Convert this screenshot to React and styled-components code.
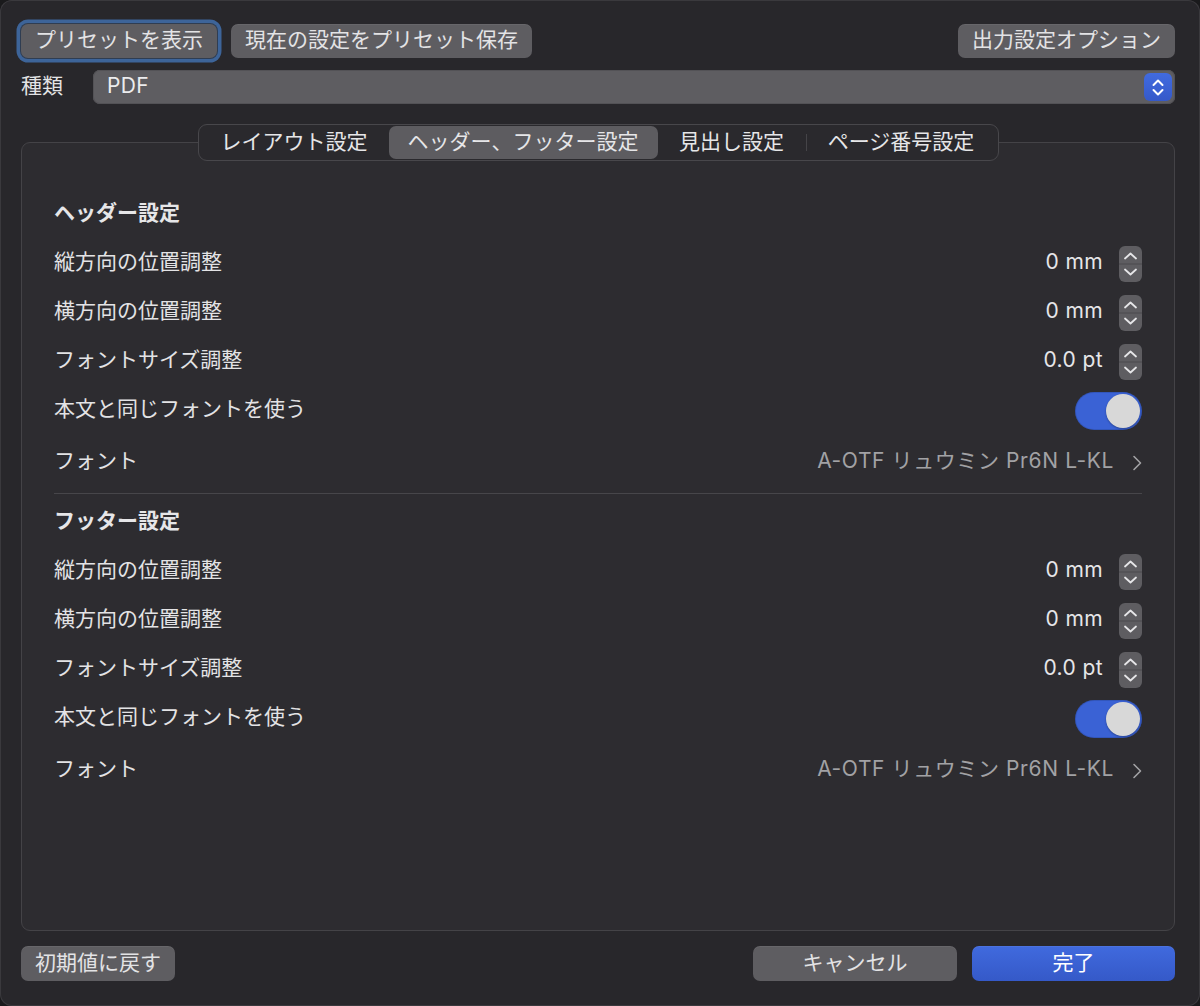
import styled, { createGlobalStyle } from 'styled-components';

const GlobalStyle = createGlobalStyle`
  * { box-sizing: border-box; }
  html, body { margin: 0; padding: 0; background: #1a1a1c; }
  body { font-family: Inter, "Noto Sans CJK JP", sans-serif; }
`;

const Window = styled.div`
  display: flex;
  flex-direction: column;
  width: 1200px;
  height: 1006px;
  padding: 24px 25px 25px 21px;
  background-color: #28272b;
  border-radius: 12px;
  box-shadow: inset 0 0 0 1px #3a393d;
  color: #e3e3e5;
  font-size: 21px;
`;

const TopBar = styled.div`
  display: flex;
  align-items: center;
  justify-content: space-between;
  height: 34px;
`;

const ButtonGroup = styled.div`
  display: flex;
  align-items: center;
  gap: ${(p) => p.$gap || 14}px;
`;

const Button = styled.button`
  height: ${(p) => p.$height || 34}px;
  ${(p) => p.$width && `width: ${p.$width}px;`}
  padding: 0 14px 3px;
  border: none;
  border-radius: 7px;
  background: ${(p) =>
    p.$primary ? 'linear-gradient(#406ade, #3559c8)' : '#5e5d61'};
  color: ${(p) => (p.$primary ? '#ffffff' : '#e3e3e5')};
  font-family: inherit;
  font-size: 21px;
  line-height: 1;
  white-space: nowrap;
  box-shadow: ${(p) =>
    p.$focused
      ? '0 0 0 1px #2f3d52, 0 0 0 4.5px #3d6499'
      : 'inset 0 1px 0 rgba(255, 255, 255, 0.06)'};
`;

const TypeRow = styled.div`
  display: flex;
  align-items: center;
  gap: 30px;
  height: 34px;
  margin-top: 12px;
`;

const Label = styled.span`
  padding-bottom: 3px;
  font-size: 21px;
  line-height: 26px;
  color: #e3e3e5;
  white-space: nowrap;
`;

const Select = styled.div`
  display: flex;
  flex: 1;
  align-items: center;
  justify-content: space-between;
  height: 34px;
  padding: 0 3px 0 14px;
  border-radius: 7px;
  background-color: #5e5d61;
  box-shadow: inset 0 0 0 1px #535256, inset 0 1px 0 rgba(255, 255, 255, 0.08);
  font-size: 21px;
  color: #ececee;

  span {
    padding-bottom: 2px;
    line-height: 26px;
    letter-spacing: 0.4px;
  }
`;

const SelectArrows = styled.div`
  display: flex;
  width: 28px;
  height: 28px;
  border-radius: 6px;
  background: linear-gradient(#416be0, #3559c9);
`;

const TabView = styled.div`
  display: flex;
  flex: 1;
  flex-direction: column;
  margin-top: 20px;
`;

const TabBar = styled.div`
  position: relative;
  z-index: 1;
  display: flex;
  align-self: center;
  height: 37px;
  margin-bottom: -19px;
  padding: 1px;
  border: 1px solid #48474b;
  border-radius: 9px;
  background-color: #2a292d;
`;

const Tab = styled.div`
  position: relative;
  display: flex;
  align-items: center;
  justify-content: center;
  width: ${(p) => p.$width}px;
  height: 33px;
  padding-bottom: 2px;
  border-radius: 7px;
  background-color: ${(p) => (p.$active ? '#5d5c60' : 'transparent')};
  font-size: 21px;
  line-height: 26px;
  color: #e6e6e8;
  white-space: nowrap;

  ${(p) =>
    p.$sep &&
    `&::before {
      content: '';
      position: absolute;
      left: 0;
      top: 8px;
      width: 1px;
      height: 17px;
      background-color: #454448;
    }`}
`;

const Panel = styled.div`
  flex: 1;
  padding: 46px 32px 0 32px;
  border: 1px solid #444347;
  border-radius: 9px;
  background-color: #2d2c30;
`;

const SectionTitle = styled.div`
  display: flex;
  align-items: center;
  height: 50px;
  padding-bottom: 2px;
  margin-top: ${(p) => p.$top || 0}px;
  font-size: 21px;
  font-weight: 700;
  line-height: 26px;
  color: #e6e6e8;
`;

const Row = styled.div`
  display: flex;
  align-items: center;
  justify-content: space-between;
  height: 49px;
  margin-top: ${(p) => p.$top || 0}px;
`;

const Control = styled.div`
  display: flex;
  align-items: center;
  gap: ${(p) => p.$gap || 16}px;
`;

const Value = styled.span`
  padding-bottom: 3px;
  font-size: 21px;
  line-height: 26px;
  letter-spacing: ${(p) => (p.$muted ? 0.6 : 0.4)}px;
  color: ${(p) => (p.$muted ? '#a2a2a5' : '#e6e6e8')};
  white-space: nowrap;
`;

const StepperBox = styled.div`
  display: flex;
  width: 23px;
  height: 36px;
  border-radius: 6px;
  background-color: #5e5d61;
`;

const Switch = styled.div`
  display: flex;
  align-items: center;
  justify-content: flex-end;
  width: 67px;
  height: 38px;
  padding: 2px;
  border-radius: 19px;
  background-color: #3a62d5;
  box-shadow: inset 0 0 0 1px rgba(0, 0, 0, 0.12);
`;

const Knob = styled.div`
  width: 34px;
  height: 34px;
  border-radius: 50%;
  background-color: #d8d8d8;
  box-shadow: 0 1px 2px rgba(0, 0, 0, 0.3);
`;

const Divider = styled.div`
  height: 1px;
  margin-top: 6px;
  background-color: #47464a;
`;

const BottomBar = styled.div`
  display: flex;
  align-items: center;
  justify-content: space-between;
  margin-top: 15px;
`;

function Stepper() {
  return (
    <StepperBox>
      <svg width="23" height="36" viewBox="0 0 23 36">
        <path d="M6 12.5 L11.5 7.5 L17 12.5" stroke="#e6e6e8" strokeWidth="1.8" fill="none" strokeLinecap="round" strokeLinejoin="round" />
        <line x1="0" y1="18" x2="23" y2="18" stroke="#4b4a4e" strokeWidth="1" />
        <path d="M6 23.5 L11.5 28.5 L17 23.5" stroke="#e6e6e8" strokeWidth="1.8" fill="none" strokeLinecap="round" strokeLinejoin="round" />
      </svg>
    </StepperBox>
  );
}

function Chevron() {
  return (
    <svg width="10" height="18" viewBox="0 0 10 18">
      <path d="M2 2.5 L8.5 9 L2 15.5" stroke="#a2a2a5" strokeWidth="1.6" fill="none" strokeLinecap="round" strokeLinejoin="round" />
    </svg>
  );
}

function Section({ title, top }) {
  return (
    <>
      <SectionTitle $top={top}>{title}</SectionTitle>
      <Row>
        <Label>縦方向の位置調整</Label>
        <Control>
          <Value>0 mm</Value>
          <Stepper />
        </Control>
      </Row>
      <Row>
        <Label>横方向の位置調整</Label>
        <Control>
          <Value>0 mm</Value>
          <Stepper />
        </Control>
      </Row>
      <Row>
        <Label>フォントサイズ調整</Label>
        <Control>
          <Value>0.0 pt</Value>
          <Stepper />
        </Control>
      </Row>
      <Row>
        <Label>本文と同じフォントを使う</Label>
        <Switch>
          <Knob />
        </Switch>
      </Row>
      <Row $top={3}>
        <Label>フォント</Label>
        <Control $gap={18}>
          <Value $muted>A-OTF リュウミン Pr6N L-KL</Value>
          <Chevron />
        </Control>
      </Row>
    </>
  );
}

const tabs = [
  { label: 'レイアウト設定', width: 189 },
  { label: 'ヘッダー、フッター設定', width: 269, active: true },
  { label: '見出し設定', width: 148 },
  { label: 'ページ番号設定', width: 191, sep: true },
];

export default function App() {
  return (
    <>
      <GlobalStyle />
      <Window>
        <TopBar>
          <ButtonGroup>
            <Button $focused>プリセットを表示</Button>
            <Button>現在の設定をプリセット保存</Button>
          </ButtonGroup>
          <Button>出力設定オプション</Button>
        </TopBar>

        <TypeRow>
          <Label>種類</Label>
          <Select>
            <span>PDF</span>
            <SelectArrows>
              <svg width="28" height="28" viewBox="0 0 28 28">
                <path d="M9.5 12 L14 7.5 L18.5 12" stroke="#ffffff" strokeWidth="2" fill="none" strokeLinecap="round" strokeLinejoin="round" />
                <path d="M9.5 17 L14 21.5 L18.5 17" stroke="#ffffff" strokeWidth="2" fill="none" strokeLinecap="round" strokeLinejoin="round" />
              </svg>
            </SelectArrows>
          </Select>
        </TypeRow>

        <TabView>
          <TabBar>
            {tabs.map((t) => (
              <Tab key={t.label} $width={t.width} $active={t.active} $sep={t.sep}>
                {t.label}
              </Tab>
            ))}
          </TabBar>
          <Panel>
            <Section title="ヘッダー設定" />
            <Divider />
            <Section title="フッター設定" top={3} />
          </Panel>
        </TabView>

        <BottomBar>
          <Button $height={35}>初期値に戻す</Button>
          <ButtonGroup $gap={15}>
            <Button $height={35} $width={204}>キャンセル</Button>
            <Button $height={35} $width={203} $primary>完了</Button>
          </ButtonGroup>
        </BottomBar>
      </Window>
    </>
  );
}
